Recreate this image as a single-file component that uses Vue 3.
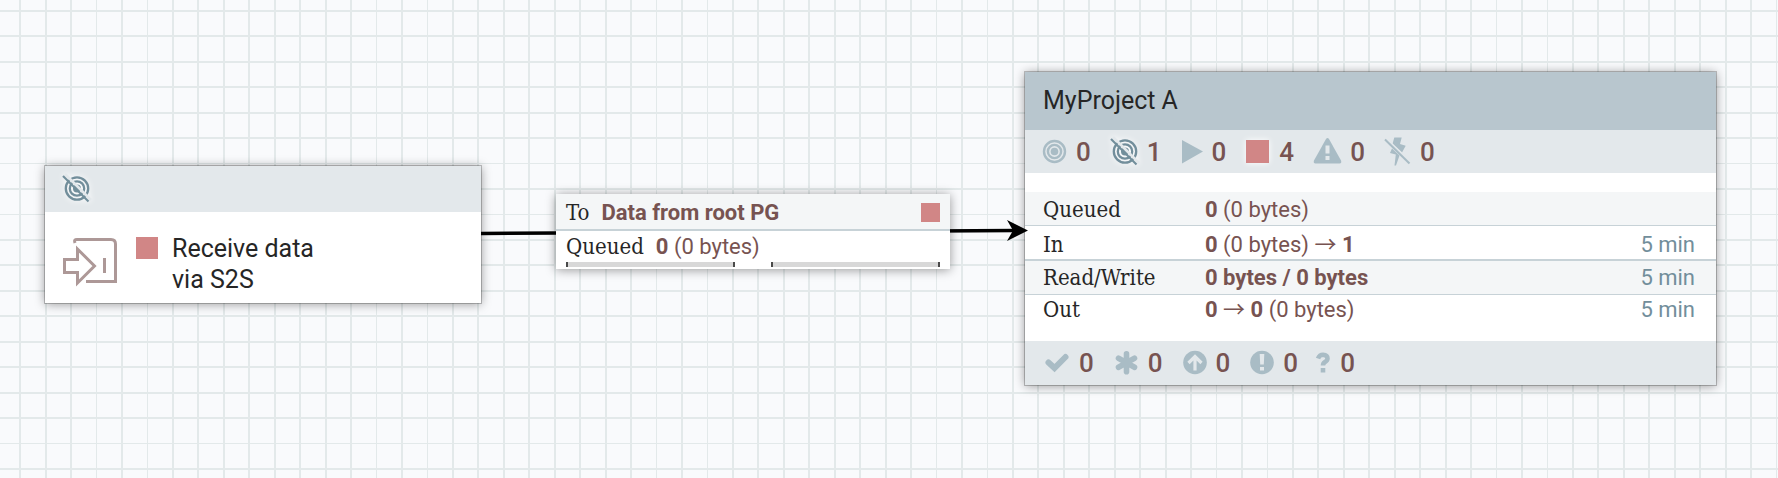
<script setup>
const gridLines = [
  [19, 2], [45, 2], [70, 2], [96, 1], [121, 2], [147, 1],
  [172, 2], [197, 2], [223, 2], [248, 2], [274, 2],
]
const status = [
  { id: 'transmitting', w: 23, n: 0 },
  { id: 'not-transmitting', w: 26, n: 1 },
  { id: 'running', w: 20, n: 0 },
  { id: 'stopped', w: 23, n: 4 },
  { id: 'invalid', w: 26, n: 0 },
  { id: 'disabled', w: 25, n: 0 },
]
const versions = [
  { id: 'up-to-date', w: 24, n: 0 },
  { id: 'modified', w: 24, n: 0 },
  { id: 'stale', w: 23, n: 0 },
  { id: 'modified-stale', w: 23, n: 0 },
  { id: 'sync-failure', w: 12, n: 0 },
]
</script>

<template>
  <main class="canvas">
    <svg class="grid" width="100%" height="100%" aria-hidden="true">
      <defs>
        <pattern id="cols" width="280" height="280" patternUnits="userSpaceOnUse">
          <rect v-for="[p, s] in gridLines" :key="p" :x="p" y="0" :width="s" height="280" fill="#e3e9ea" />
        </pattern>
        <pattern id="rows" y="67" width="280" height="280" patternUnits="userSpaceOnUse">
          <rect v-for="[p, s] in gridLines" :key="p" x="0" :y="p" width="280" :height="s" fill="#e3e9ea" />
        </pattern>
      </defs>
      <rect width="100%" height="100%" fill="url(#cols)" />
      <rect width="100%" height="100%" fill="url(#rows)" />
    </svg>

    <section class="node port">
      <header class="port-head">
        <svg class="glow" width="26" height="26" viewBox="0 0 26 26"><use href="#not-transmitting" /></svg>
      </header>
      <div class="port-body">
        <svg class="port-icon" width="55" height="48" viewBox="0 0 55 48" fill="none" stroke="#ad9897">
          <path d="M12 5C11 2 12 1.500 14 1.500H48Q52.500 1.500 52.500 6V43.500H23" stroke-width="3" />
          <path d="M1.500 21.500H14.500V11L31.500 28L14.500 45V34.500H1.500Z" stroke-width="3" />
          <path d="M41.500 20V35" stroke-width="3" />
        </svg>
        <span class="stop port-stop"></span>
        <h2 class="port-name">Receive data<br>via S2S</h2>
      </div>
    </section>

    <section class="node group">
      <header class="group-head"><h2>MyProject A</h2></header>
      <ul class="counts">
        <li v-for="s in status" :key="s.id">
          <svg :class="{ glow: s.n > 0 }" :width="s.w" height="26" :viewBox="`0 0 ${s.w} 26`"><use :href="'#' + s.id" /></svg>
          <span>{{ s.n }}</span>
        </li>
      </ul>
      <table class="stats">
        <tbody>
          <tr class="queued"><th scope="row">Queued</th><td><b>0</b> (0 bytes)</td><td></td></tr>
          <tr class="in"><th scope="row">In</th><td><b>0</b> (0 bytes) <i>→</i> <b>1</b></td><td class="time">5 min</td></tr>
          <tr class="rw"><th scope="row">Read/Write</th><td><b>0 bytes / 0 bytes</b></td><td class="time">5 min</td></tr>
          <tr class="out"><th scope="row">Out</th><td><b>0</b> <i>→</i> <b>0</b> (0 bytes)</td><td class="time">5 min</td></tr>
        </tbody>
      </table>
      <ul class="counts foot">
        <li v-for="s in versions" :key="s.id">
          <svg :width="s.w" height="26" :viewBox="`0 0 ${s.w} 26`"><use :href="'#' + s.id" /></svg>
          <span>{{ s.n }}</span>
        </li>
      </ul>
    </section>

    <svg class="wire" width="548" height="24" viewBox="0 0 548 24" aria-hidden="true">
      <path d="M0 14.500L535 11.500" stroke="#000" stroke-width="3.500" />
      <path d="M547 11.500L526 1L532 11.500L526 22Z" />
    </svg>

    <section class="connection">
      <div class="conn-row dest">
        <span class="label">To</span><b>Data from root PG</b><span class="stop conn-stop"></span>
      </div>
      <div class="conn-row">
        <span class="label">Queued</span><span><b>0</b> (0 bytes)</span>
      </div>
      <div class="bars"><span></span><span></span></div>
    </section>

    <svg class="defs" width="0" height="0" aria-hidden="true">
      <defs>
        <g id="transmitting" fill="none" stroke="#a9bcc5" stroke-width="2.400">
          <circle cx="11.500" cy="12.500" r="10.500" /><circle cx="11.500" cy="12.500" r="6.600" />
          <circle cx="11.500" cy="12.500" r="3.800" fill="#a9bcc5" stroke="none" />
        </g>
        <g id="not-transmitting">
          <g fill="none" stroke="#728e9b" stroke-width="2.300">
            <circle cx="14" cy="12.500" r="11.200" /><circle cx="14" cy="12.500" r="7.200" />
          </g>
          <circle cx="14" cy="12.500" r="4" fill="#728e9b" />
          <path d="M2 -2L28 24" stroke="#e3e8eb" stroke-width="2.600" />
          <path d="M0 0L25.500 25.500" stroke="#728e9b" stroke-width="2.200" />
        </g>
        <path id="running" d="M0 1L21 12.500L0 24.500Z" fill="#a9bcc5" />
        <rect id="stopped" y="1" width="23" height="23" fill="#d18686" />
        <g id="invalid">
          <path d="M12 0Q13.500 -2 15 0L27 21.500Q28 24.500 25.500 24.500H1.500Q-1 24.500 0 21.500Z" fill="#a9bcc5" />
          <path d="M11.500 6.500H15.500V14.500H11.500ZM11.500 17H15.500V21H11.500Z" fill="#e3e8eb" />
        </g>
        <g id="disabled" fill="#a9bcc5">
          <path d="M9.300 -1.500H16.700L15 5L20.700 6.700L17 13.500L7.500 5Z" />
          <path d="M7 9.500L14.500 16.500L11 26.500H9.500L10.800 15.500L5 14Z" />
          <path d="M2.500 0.500L26.500 23.500" stroke="#e3e8eb" stroke-width="1.500" />
          <path d="M0 0.500L24.500 24.500" stroke="#a9bcc5" stroke-width="2" />
        </g>
        <path id="up-to-date" d="M3.500 12.500L9.500 18L20.500 7" fill="none" stroke="#a9bcc5" stroke-width="6" stroke-linecap="round" />
        <path id="modified" d="M12.500 3.800V21.700M4.500 8.200L20.500 17.300M20.500 8.200L4.500 17.300" stroke="#a9bcc5" stroke-width="5.600" stroke-linecap="round" />
        <g id="stale">
          <circle cx="12" cy="12.500" r="11.800" fill="#a9bcc5" />
          <path d="M12 20.500V8M5.500 13L12 6.500L18.500 13" fill="none" stroke="#e3e8eb" stroke-width="3.200" />
        </g>
        <g id="modified-stale">
          <circle cx="12" cy="12.500" r="11.800" fill="#a9bcc5" />
          <path d="M9.700 4H14.300L13.800 14.500H10.200ZM10 17H14V20.500H10Z" fill="#e3e8eb" />
        </g>
        <path id="sync-failure" d="M0 8.500Q1.500 4.800 5 4.800Q9.500 5 9.500 8.500Q9.500 10.500 7 12Q5 13.200 5 15.500M5 18V22.500" fill="none" stroke="#a9bcc5" stroke-width="4.600" />
      </defs>
    </svg>
  </main>
</template>

<style>
body { margin: 0; }
</style>

<style scoped>
.canvas {
  position: relative;
  min-height: 100vh;
  overflow: hidden;
  background: #f9fafc;
  font-family: Roboto, "Liberation Sans", sans-serif;
  font-size: 22px;
  line-height: 26px;
  color: #775351;
}
.grid { position: absolute; top: 0; left: 0; }
.defs { position: absolute; }
svg { display: block; flex: none; overflow: visible; }
h2 { margin: 0; font-size: 25px; font-weight: 400; line-height: 31px; color: #262626; }
.node, .connection { position: absolute; background: #fff; box-shadow: 0 0 0 1px rgba(0, 0, 0, .22), 0 1px 10px rgba(0, 0, 0, .4); }
.glow { filter: drop-shadow(0 0 3px #fff); }
.stop { background: #d18686; }

.port { left: 45px; top: 166px; width: 436px; }
.port-head { padding: 10px 18px; background: #e3e8eb; }
.port-body { display: flex; align-items: flex-start; padding: 21px 18px 8px; }
.port-icon { margin-top: 5px; }
.port-stop { width: 22px; height: 22px; margin: 4px 14px 0 18px; }

.group { left: 1025px; top: 72px; width: 691px; }
.group-head { padding: 13px 18px 14px; background: #b8c6ce; }
.counts { display: flex; gap: 20px; margin: 0; padding: 9px 18px 8px; list-style: none; background: #e3e8eb; font-size: 26px; font-weight: 500; }
.counts li { display: flex; gap: 10px; }
.foot { padding: 9px 20px; }
.stats { width: 100%; margin: 19px 0 0; border-collapse: separate; border-spacing: 0; }
.stats th, .stats td { padding: 5px 0 2px; text-align: left; vertical-align: top; white-space: nowrap; }
.stats th { width: 162px; padding-left: 18px; }
.stats th, .label { font-family: "DejaVu Serif Condensed", "DejaVu Serif", serif; font-weight: 400; color: #262626; }
.stats .time { padding-right: 21px; text-align: right; color: #728e9b; }
.stats i { font-family: "Noto Sans CJK JP", sans-serif; font-style: normal; line-height: 0; }
.queued, .rw { background: #f4f6f7; }
.queued > *, .in > *, .rw > * { border-bottom: 1px solid #c7d2d7; }
.stats .in > * { padding-top: 6px; border-bottom-width: 2px; padding-bottom: 1px; }
.stats .rw > * { padding-top: 4px; padding-bottom: 3px; }
.stats .out > * { padding-top: 2px; padding-bottom: 18px; }

.wire { position: absolute; left: 481px; top: 219px; }
.connection { left: 556px; top: 194px; width: 394px; box-shadow: 0 1px 10px rgba(0, 0, 0, .4); }
.conn-row { display: flex; gap: 12px; padding: 3px 10px 1px; }
.dest { padding: 6px 10px 3px; background: #f4f6f7; border-bottom: 2px solid #c7d2d7; }
.conn-stop { width: 19px; height: 19px; margin: 3px 0 0 auto; }
.bars { display: grid; grid-template-columns: 1fr 1fr; gap: 36px; padding: 1px 10px 2px; }
.bars span { height: 5px; background: #d8d8d8; border: solid #4a4a4a; border-width: 0 2px; }
</style>
